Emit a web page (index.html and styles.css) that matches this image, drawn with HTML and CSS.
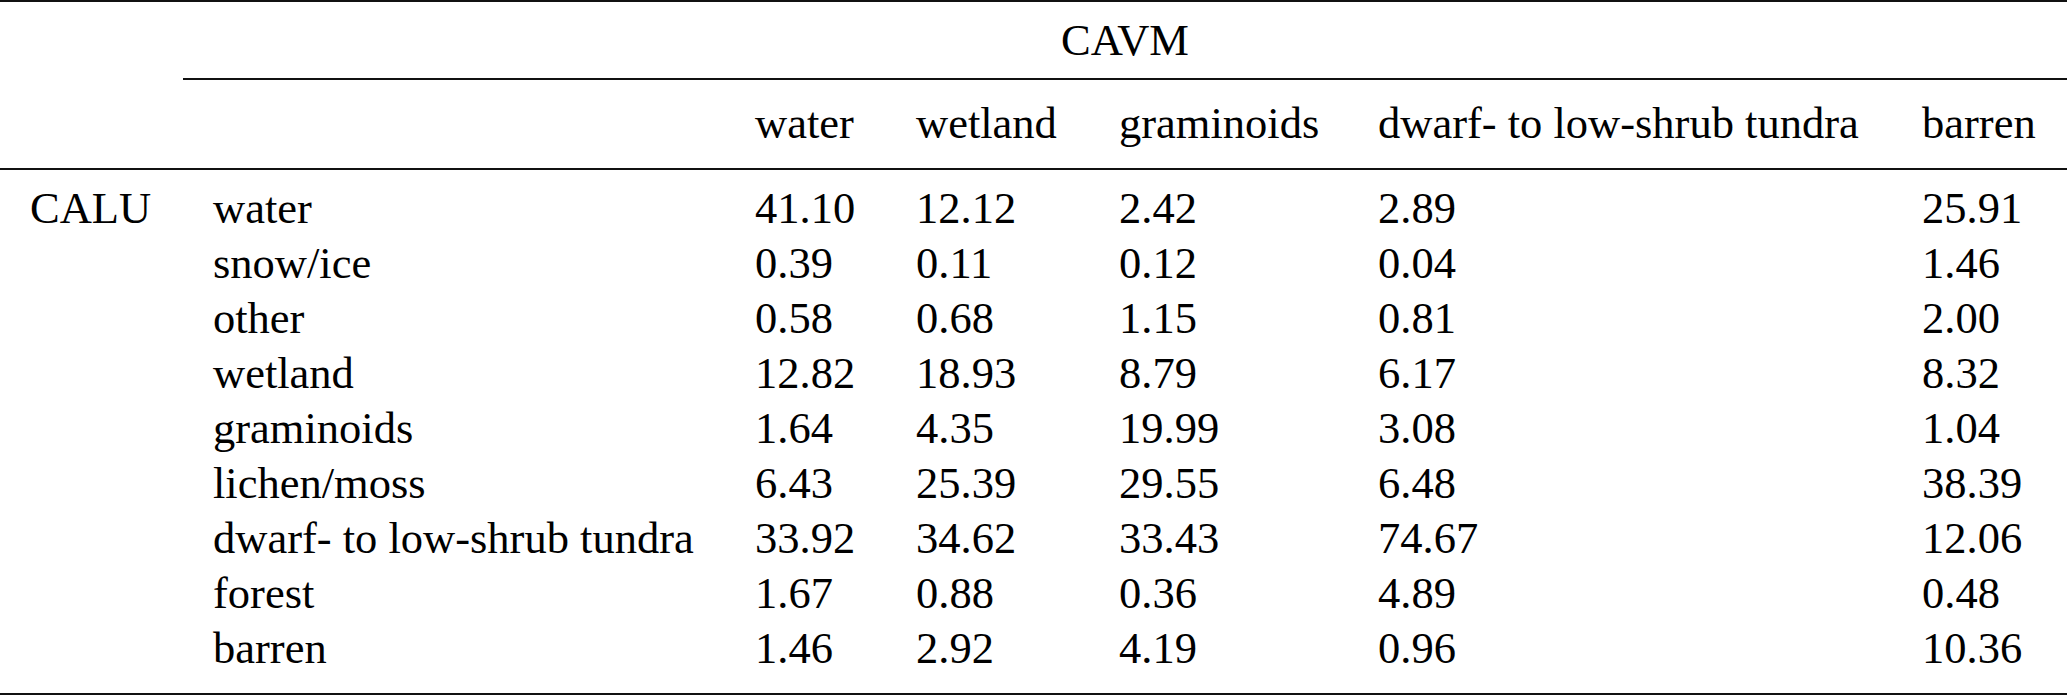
FILE: index.html
```html
<!DOCTYPE html>
<html lang="en">
<head>
<meta charset="utf-8">
<title>CALU vs CAVM</title>
<link rel="stylesheet" href="styles.css">
</head>
<body>
<table class="tbl">
  <colgroup>
    <col class="c-group">
    <col class="c-label">
    <col class="c-water">
    <col class="c-wetland">
    <col class="c-gram">
    <col class="c-dwarf">
    <col class="c-barren">
  </colgroup>
  <thead>
    <tr class="row-super">
      <th class="blank"></th>
      <th class="super" colspan="6">CAVM</th>
    </tr>
    <tr class="row-head">
      <th></th>
      <th></th>
      <th>water</th>
      <th>wetland</th>
      <th>graminoids</th>
      <th>dwarf- to low-shrub tundra</th>
      <th>barren</th>
    </tr>
  </thead>
  <tbody>
    <tr class="first">
      <td>CALU</td><td>water</td><td>41.10</td><td>12.12</td><td>2.42</td><td>2.89</td><td>25.91</td>
    </tr>
    <tr>
      <td></td><td>snow/ice</td><td>0.39</td><td>0.11</td><td>0.12</td><td>0.04</td><td>1.46</td>
    </tr>
    <tr>
      <td></td><td>other</td><td>0.58</td><td>0.68</td><td>1.15</td><td>0.81</td><td>2.00</td>
    </tr>
    <tr>
      <td></td><td>wetland</td><td>12.82</td><td>18.93</td><td>8.79</td><td>6.17</td><td>8.32</td>
    </tr>
    <tr>
      <td></td><td>graminoids</td><td>1.64</td><td>4.35</td><td>19.99</td><td>3.08</td><td>1.04</td>
    </tr>
    <tr>
      <td></td><td>lichen/moss</td><td>6.43</td><td>25.39</td><td>29.55</td><td>6.48</td><td>38.39</td>
    </tr>
    <tr>
      <td></td><td>dwarf- to low-shrub tundra</td><td>33.92</td><td>34.62</td><td>33.43</td><td>74.67</td><td>12.06</td>
    </tr>
    <tr>
      <td></td><td>forest</td><td>1.67</td><td>0.88</td><td>0.36</td><td>4.89</td><td>0.48</td>
    </tr>
    <tr class="last">
      <td></td><td>barren</td><td>1.46</td><td>2.92</td><td>4.19</td><td>0.96</td><td>10.36</td>
    </tr>
  </tbody>
</table>
</body>
</html>
```

FILE: styles.css
```css
* {
  box-sizing: border-box;
}

html, body {
  margin: 0;
  padding: 0;
  background: #ffffff;
}

body {
  width: 2067px;
  height: 695px;
  overflow: hidden;
  font-family: "Liberation Serif", serif;
  font-size: 44.5px;
  color: #000000;
}

.tbl {
  width: 2067px;
  table-layout: fixed;
  border-collapse: separate;
  border-spacing: 0;
  border-top: 2px solid #111;
  border-bottom: 2px solid #111;
  font-family: "Liberation Serif", serif;
}

.c-group { width: 183px; }
.c-label { width: 542px; }
.c-water { width: 161px; }
.c-wetland { width: 203px; }
.c-gram { width: 259px; }
.c-dwarf { width: 544px; }
.c-barren { width: 175px; }

.tbl th,
.tbl td {
  padding: 0 30px;
  line-height: 55px;
  font-family: "Liberation Serif", serif;
  font-weight: normal;
  text-align: left;
  white-space: nowrap;
  vertical-align: top;
}

.row-super th {
  padding-top: 10.5px;
  padding-bottom: 10.5px;
}

.row-super .super {
  text-align: center;
  padding-left: 0;
  padding-right: 0;
  border-bottom: 2px solid #111;
}

.row-head th {
  padding-top: 15.5px;
  padding-bottom: 17.5px;
  border-bottom: 2px solid #111;
}

.tbl tr.first td {
  padding-top: 10.5px;
}

.tbl tr.last td {
  padding-bottom: 17.5px;
}
```
